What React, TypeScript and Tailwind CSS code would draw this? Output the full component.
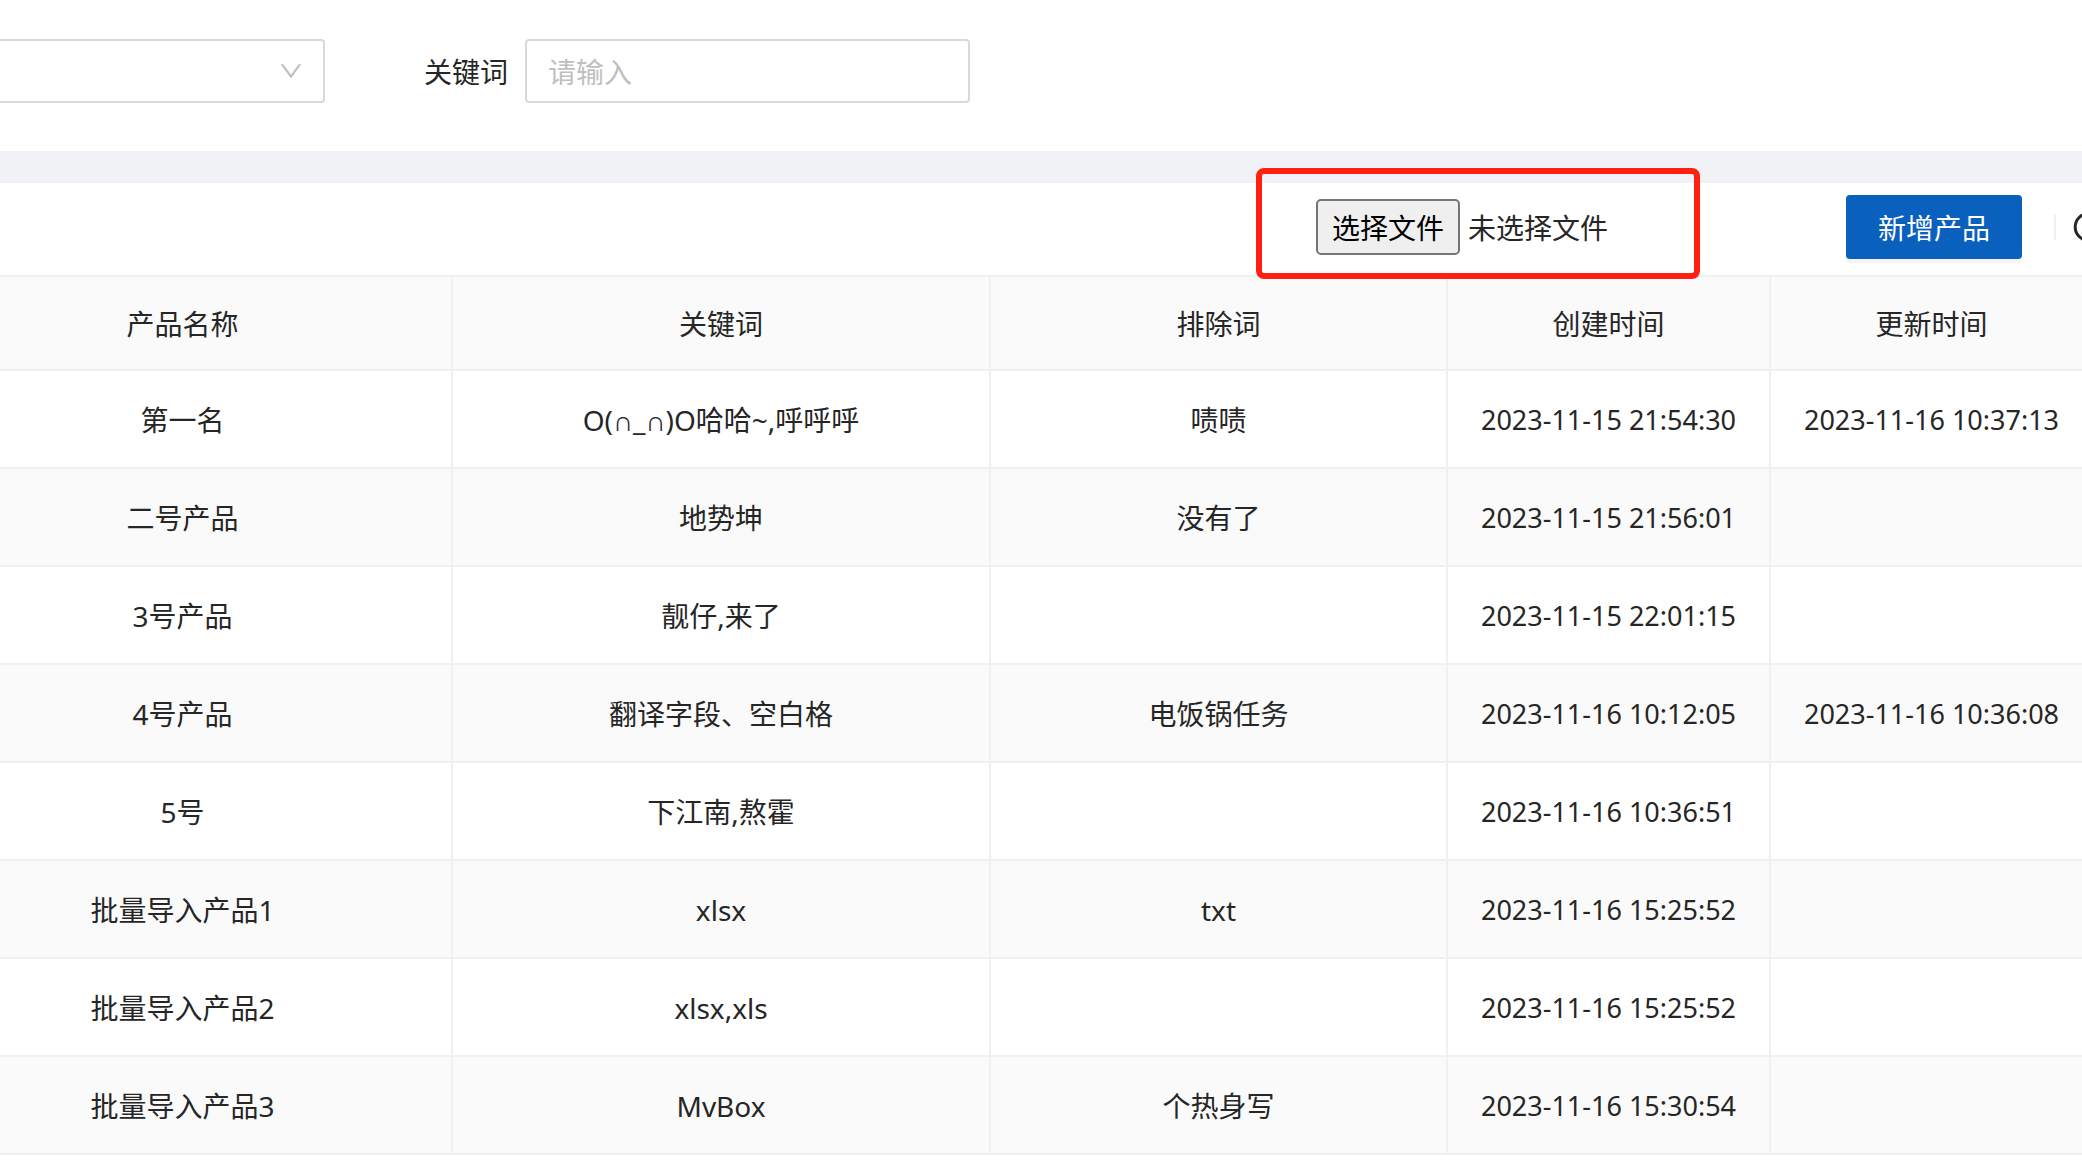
import React, { useRef, useState } from 'react';

interface Product {
  name: string;
  keywords: string;
  excludes: string;
  createdAt: string;
  updatedAt: string;
}

const products: Product[] = [
  { name: '第一名', keywords: 'O(∩_∩)O哈哈~,呼呼呼', excludes: '啧啧', createdAt: '2023-11-15 21:54:30', updatedAt: '2023-11-16 10:37:13' },
  { name: '二号产品', keywords: '地势坤', excludes: '没有了', createdAt: '2023-11-15 21:56:01', updatedAt: '' },
  { name: '3号产品', keywords: '靓仔,来了', excludes: '', createdAt: '2023-11-15 22:01:15', updatedAt: '' },
  { name: '4号产品', keywords: '翻译字段、空白格', excludes: '电饭锅任务', createdAt: '2023-11-16 10:12:05', updatedAt: '2023-11-16 10:36:08' },
  { name: '5号', keywords: '下江南,熬霍', excludes: '', createdAt: '2023-11-16 10:36:51', updatedAt: '' },
  { name: '批量导入产品1', keywords: 'xlsx', excludes: 'txt', createdAt: '2023-11-16 15:25:52', updatedAt: '' },
  { name: '批量导入产品2', keywords: 'xlsx,xls', excludes: '', createdAt: '2023-11-16 15:25:52', updatedAt: '' },
  { name: '批量导入产品3', keywords: 'MvBox', excludes: '个热身写', createdAt: '2023-11-16 15:30:54', updatedAt: '' },
];

const columns: { title: string; width: string; pad: string }[] = [
  { title: '产品名称', width: 'w-[453px]', pad: 'pr-[86px]' },
  { title: '关键词', width: 'w-[538px]', pad: '' },
  { title: '排除词', width: 'w-[457px]', pad: '' },
  { title: '创建时间', width: 'w-[323px]', pad: '' },
  { title: '更新时间', width: '', pad: 'pl-[10px]' },
];

const SearchBar = () => (
  <form className="flex items-center bg-white pt-[39px] pb-12" onSubmit={(e) => e.preventDefault()}>
    <div className="relative w-[325px]">
      <select aria-label="分类" className="block h-16 w-full appearance-none rounded-r border-2 border-l-0 border-[#d9d9d9] bg-white px-6 outline-none">
        <option value=""></option>
      </select>
      <svg className="pointer-events-none absolute top-5 right-[22px] h-6 w-6" viewBox="64 64 896 896" fill="#bfbfbf">
        <path d="M884 256h-75c-5.100 0-9.900 2.500-12.900 6.600L512 654.200 227.900 262.600c-3-4.100-7.800-6.600-12.900-6.600h-75c-6.500 0-10.300 7.400-6.500 12.700l352.600 486.100c12.800 17.600 39 17.600 51.700 0l352.600-486.100c3.900-5.300.1-12.700-6.400-12.700z" />
      </svg>
    </div>
    <label htmlFor="keyword" className="ml-[99px] pt-[2px]">关键词</label>
    <input
      id="keyword"
      type="text"
      placeholder="请输入"
      className="ml-[17px] h-16 w-[445px] rounded border-2 border-[#d9d9d9] px-[21px] pt-[2px] outline-none placeholder:text-[#bfbfbf]"
    />
  </form>
);

const FilePicker = () => {
  const inputRef = useRef<HTMLInputElement>(null);
  const [fileName, setFileName] = useState('');

  return (
    <div className="relative mr-[238px] flex items-center gap-2">
      <input
        ref={inputRef}
        type="file"
        aria-label="选择文件"
        tabIndex={-1}
        className="hidden"
        onChange={(e) => setFileName(e.target.files?.[0]?.name ?? '')}
      />
      <button
        type="button"
        onClick={() => inputRef.current?.click()}
        className="h-14 w-36 rounded-[5px] border-2 border-[#767676] bg-[#efefef] pt-[2px] text-black"
      >
        选择文件
      </button>
      <span className="pt-[2px]">{fileName || '未选择文件'}</span>
      {/* red frame around the picker */}
      <div className="pointer-events-none absolute -top-[31px] -right-[92px] -bottom-6 -left-[60px] rounded-lg border-[6px] border-[#ff2012]" />
    </div>
  );
};

const Toolbar = () => (
  <div className="flex h-[92px] items-center justify-end bg-white pb-1">
    <FilePicker />
    <button type="button" className="h-16 w-44 rounded bg-[#0960bd] pt-[2px] text-white shadow-[0_4px_0_rgba(0,0,0,0.043)]">
      新增产品
    </button>
    <div className="ml-8 h-[26px] w-[2px] bg-[#f0f0f0]" />
    <button type="button" aria-label="刷新" className="ml-4 flex w-[10px] overflow-hidden">
      <svg className="h-8 w-8 shrink-0" viewBox="0 0 32 32" fill="none" stroke="#262626" strokeWidth="3">
        <circle cx="16.7" cy="16" r="13.5" />
      </svg>
    </button>
  </div>
);

const ProductTable = () => (
  <table className="w-full table-fixed border-separate border-spacing-0 border-t-2 border-[#f0f0f0] text-center">
    <colgroup>
      {columns.map((col) => (
        <col key={col.title} className={col.width} />
      ))}
    </colgroup>
    <thead>
      <tr className="h-[94px] bg-[#fafafa]">
        {columns.map((col) => (
          <th key={col.title} className={`border-r-2 border-b-2 border-[#f0f0f0] pt-[2px] font-normal last:border-r-0 ${col.pad}`}>
            {col.title}
          </th>
        ))}
      </tr>
    </thead>
    <tbody>
      {products.map((row) => (
        <tr key={row.name} className="h-[98px] even:bg-[#fafafa]">
          <td className="border-r-2 border-b-2 border-[#f0f0f0] pt-[2px] pr-[86px]">{row.name}</td>
          <td className="border-r-2 border-b-2 border-[#f0f0f0] pt-[2px]">{row.keywords}</td>
          <td className="border-r-2 border-b-2 border-[#f0f0f0] pt-[2px]">{row.excludes}</td>
          <td className="border-r-2 border-b-2 border-[#f0f0f0] pt-[2px] text-[27px] whitespace-nowrap">{row.createdAt}</td>
          <td className="border-b-2 border-[#f0f0f0] pt-[2px] pl-[10px] text-[27px] whitespace-nowrap">{row.updatedAt}</td>
        </tr>
      ))}
    </tbody>
  </table>
);

const App: React.FC = () => {
  return (
    <div className="min-h-screen overflow-hidden bg-white font-['Noto_Sans','Liberation_Sans','Noto_Sans_CJK_SC',sans-serif] text-[28px] leading-[44px] text-[#262626]">
      <SearchBar />
      <div className="h-8 bg-[#f0f2f5]" />
      <Toolbar />
      <ProductTable />
    </div>
  );
};

export default App;
